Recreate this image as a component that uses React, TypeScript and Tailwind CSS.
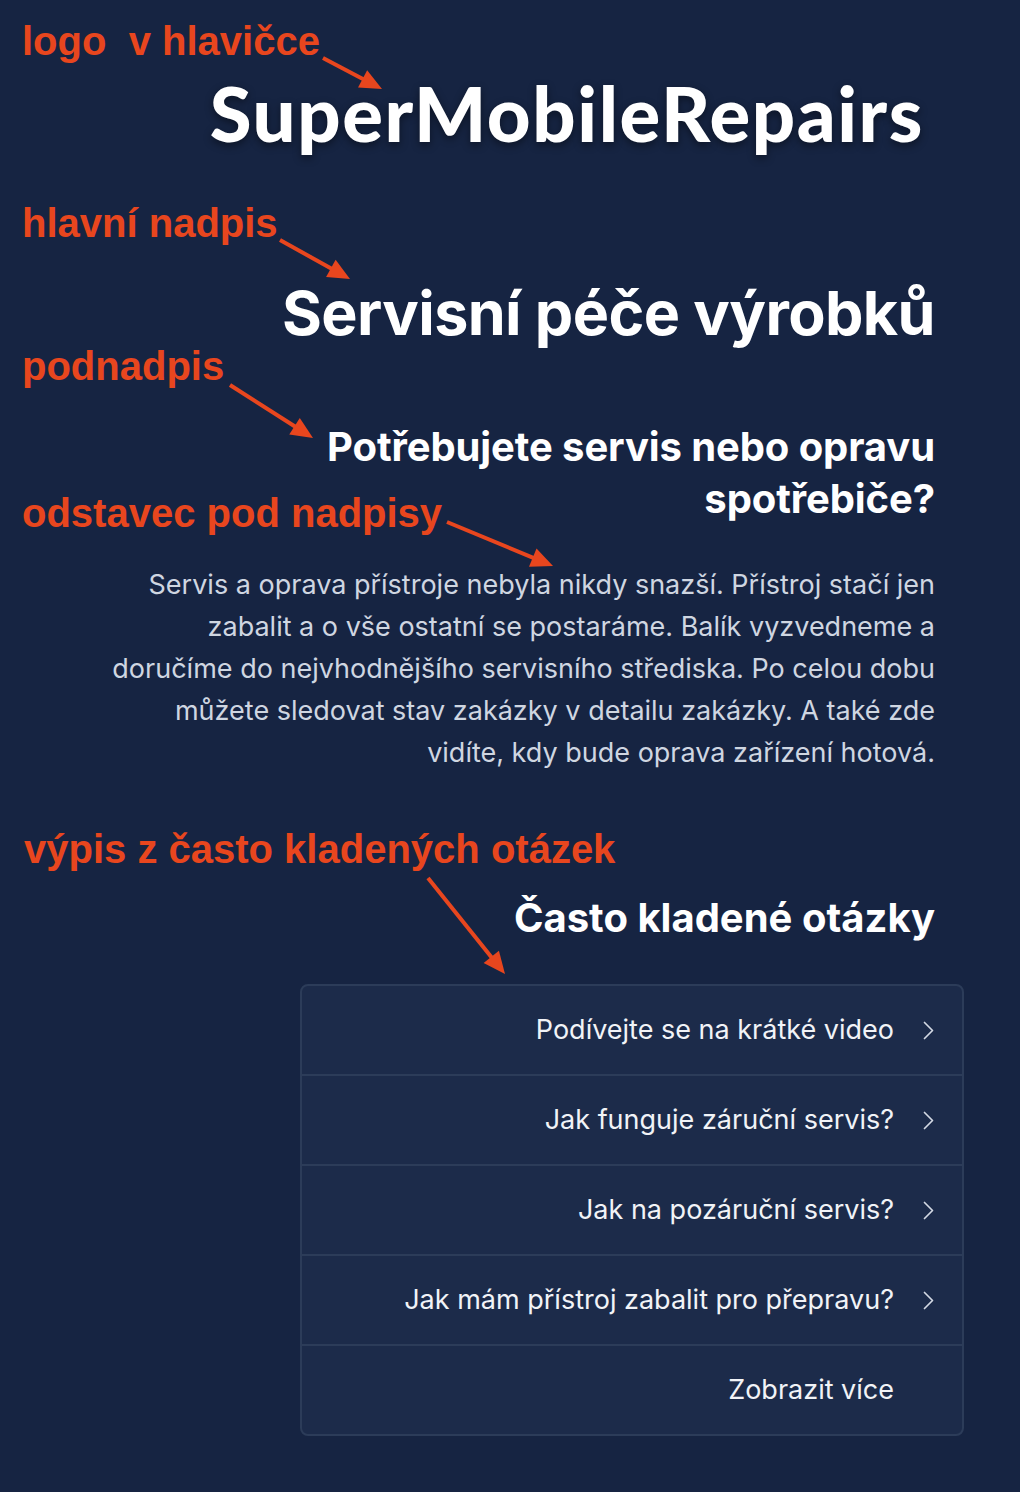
const FAQ_ITEMS = [
  'Podívejte se na krátké video',
  'Jak funguje záruční servis?',
  'Jak na pozáruční servis?',
  'Jak mám přístroj zabalit pro přepravu?',
];

const NOTES = [
  { text: 'logo  v hlavičce', className: 'left-[22px] top-[21px]' },
  { text: 'hlavní nadpis', className: 'left-[22px] top-[203px]' },
  { text: 'podnadpis', className: 'left-[22px] top-[346px]' },
  { text: 'odstavec pod nadpisy', className: 'left-[22px] top-[493px]' },
  { text: 'výpis z často kladených otázek', className: 'left-[24px] top-[829px]' },
];

// start/end points of the callout arrows
const ARROWS = [
  { x1: 323, y1: 58, x2: 382, y2: 89 },
  { x1: 280, y1: 240, x2: 350, y2: 279 },
  { x1: 230, y1: 385, x2: 313, y2: 438 },
  { x1: 447, y1: 522, x2: 553, y2: 566 },
  { x1: 428, y1: 878, x2: 505, y2: 974 },
];

function Arrow({ x1, y1, x2, y2 }: { x1: number; y1: number; x2: number; y2: number }) {
  const angle = Math.atan2(y2 - y1, x2 - x1);
  const len = 24;
  const spread = 0.42;
  const ax = x2 - len * Math.cos(angle - spread);
  const ay = y2 - len * Math.sin(angle - spread);
  const bx = x2 - len * Math.cos(angle + spread);
  const by = y2 - len * Math.sin(angle + spread);
  const sx = x2 - (len - 4) * Math.cos(angle);
  const sy = y2 - (len - 4) * Math.sin(angle);
  return (
    <g>
      <line x1={x1} y1={y1} x2={sx} y2={sy} stroke="#e8461e" strokeWidth={4} />
      <polygon points={`${x2},${y2} ${ax},${ay} ${bx},${by}`} fill="#e8461e" />
    </g>
  );
}

function Chevron({ hidden = false }: { hidden?: boolean }) {
  return (
    <svg
      width="11"
      height="19"
      viewBox="0 0 11 19"
      fill="none"
      className={hidden ? 'invisible' : 'text-[#d3d9e3]'}
    >
      <path d="M1.5 1.5 9.5 9.5 1.5 17.5" stroke="currentColor" strokeWidth="1.7" strokeLinecap="round" strokeLinejoin="round" />
    </svg>
  );
}

export default function App() {
  return (
    <div className="relative min-h-[1492px] w-full overflow-hidden bg-[#162442] font-['Inter',sans-serif]">
      <header className="flex justify-end pr-[96px] pt-[75px]">
        <span className="font-['Lato',sans-serif] text-[76px] leading-none font-black tracking-[1.6px] text-white [text-shadow:0_3px_8px_rgba(0,0,0,0.45)]">
          SuperMobileRepairs
        </span>
      </header>

      <section className="ml-auto mt-[132px] flex w-[960px] flex-col items-end pr-[85px] text-right">
        <h1 className="text-[61px] leading-none font-bold tracking-[-0.6px] text-white">
          Servisní péče výrobků
        </h1>
        <h2 className="mt-[77px] w-[620px] text-[40px] leading-[52px] font-bold tracking-[-0.1px] text-white">
          Potřebujete servis nebo opravu spotřebiče?
        </h2>
        <p className="mt-[39px] max-w-[842px] text-[27px] leading-[42px] text-[#cfd6e1]">
          Servis a oprava přístroje nebyla nikdy snazší. Přístroj stačí jen zabalit a o vše ostatní se
          postaráme. Balík vyzvedneme a doručíme do nejvhodnějšího servisního střediska. Po celou
          dobu můžete sledovat stav zakázky v detailu zakázky. A také zde vidíte, kdy bude oprava
          zařízení hotová.
        </p>
        <h3 className="mt-[124px] text-[40px] leading-none font-bold tracking-[0px] text-white">
          Často kladené otázky
        </h3>
      </section>

      <div className="mt-[46px] mr-[56px] ml-auto w-[664px] overflow-hidden rounded-lg border-2 border-[#2c3c59] bg-[#1c2b4a]">
        {FAQ_ITEMS.map((item) => (
          <button
            key={item}
            type="button"
            className="flex h-[90px] w-full items-center justify-end gap-[29px] border-b-2 border-[#2c3c59] pr-[28px] text-[27px] text-[#f1f3f7]"
          >
            <span>{item}</span>
            <Chevron />
          </button>
        ))}
        <button
          type="button"
          className="flex h-[88px] w-full items-center justify-end gap-[29px] pr-[28px] text-[27px] text-[#f1f3f7]"
        >
          <span>Zobrazit více</span>
          <Chevron hidden />
        </button>
      </div>

      {NOTES.map((note) => (
        <span
          key={note.text}
          className={`absolute font-['Liberation_Sans',sans-serif] text-[40px] leading-none font-bold whitespace-pre text-[#e8461e] ${note.className}`}
        >
          {note.text}
        </span>
      ))}

      <svg className="pointer-events-none absolute inset-0 h-full w-full" viewBox="0 0 1020 1492">
        {ARROWS.map((a, i) => (
          <Arrow key={i} {...a} />
        ))}
      </svg>
    </div>
  );
}
